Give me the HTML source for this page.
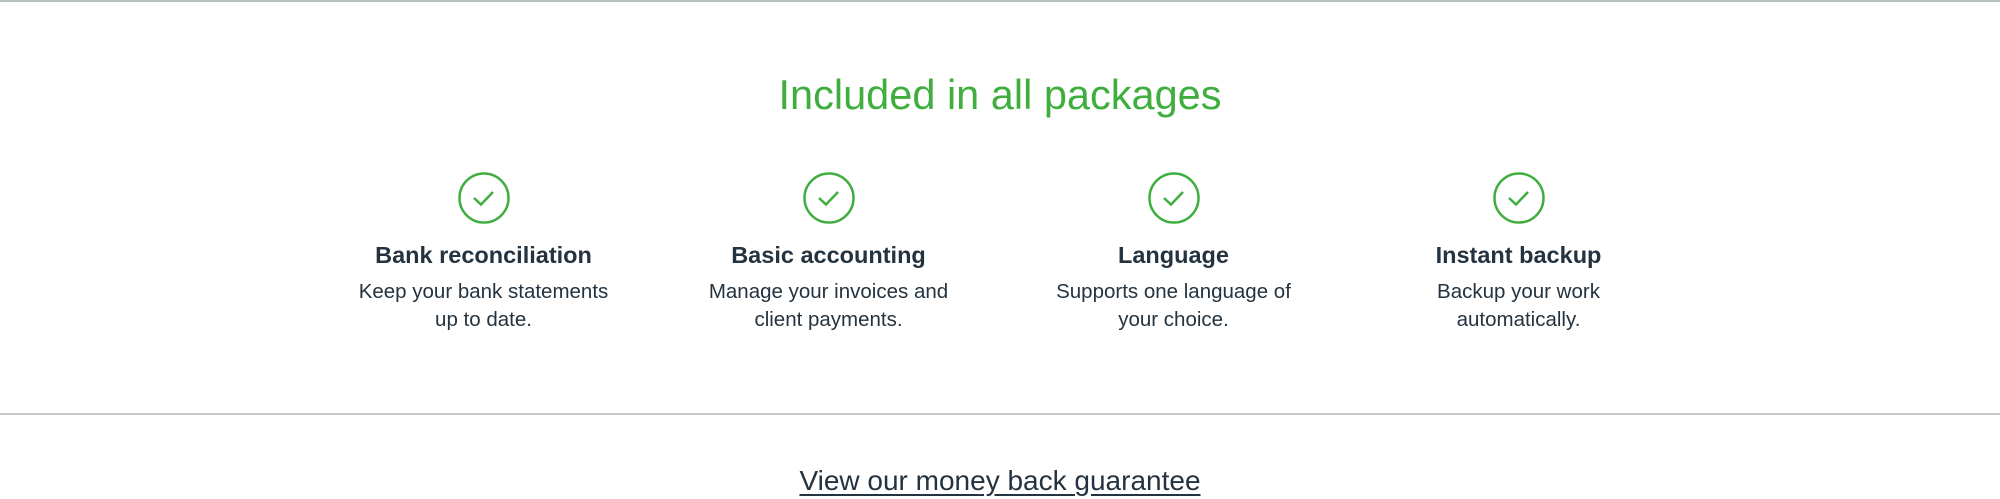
<!DOCTYPE html>
<html><head><style>
body{margin:0;width:2000px;height:498px;background:#fff;position:relative;overflow:hidden;font-family:"Liberation Sans",sans-serif;color:#24333f}
.top{position:absolute;left:0;top:0;width:2000px;height:2px;background:#b7bfc3}
.mid{position:absolute;left:0;top:413px;width:2000px;height:2px;background:#c2c7cb}
h1{position:absolute;left:0;width:2000px;top:70px;margin:0;text-align:center;font-weight:normal;font-size:41.5px;color:#3fae3f;line-height:50px}
.col{position:absolute;top:172px;width:345px;text-align:center}
.col svg{display:block;margin:0 auto}
.col h3{margin:16px 0 0;font-size:23.5px;line-height:30px;font-weight:bold;color:#24333f}
.col p{margin:8px 0 0;font-size:20.5px;line-height:28px;color:#24333f}
.link{position:absolute;left:0;width:2000px;top:463px;text-align:center;font-size:28px;line-height:36px;color:#24333f;text-decoration:underline;text-underline-offset:4px}
</style></head><body>
<div class="top"></div>
<h1>Included in all packages</h1>
<div class="col" style="left:311px">
<svg width="52" height="52" viewBox="0 0 52 52"><circle cx="26" cy="26" r="24.5" fill="none" stroke="#3fae3f" stroke-width="2.5"/><path d="M16 26 L23 32.5 L35 20" fill="none" stroke="#3fae3f" stroke-width="2.5"/></svg>
<h3>Bank reconciliation</h3><p>Keep your bank statements<br>up to date.</p></div>
<div class="col" style="left:656px">
<svg width="52" height="52" viewBox="0 0 52 52"><circle cx="26" cy="26" r="24.5" fill="none" stroke="#3fae3f" stroke-width="2.5"/><path d="M16 26 L23 32.5 L35 20" fill="none" stroke="#3fae3f" stroke-width="2.5"/></svg>
<h3>Basic accounting</h3><p>Manage your invoices and<br>client payments.</p></div>
<div class="col" style="left:1001px">
<svg width="52" height="52" viewBox="0 0 52 52"><circle cx="26" cy="26" r="24.5" fill="none" stroke="#3fae3f" stroke-width="2.5"/><path d="M16 26 L23 32.5 L35 20" fill="none" stroke="#3fae3f" stroke-width="2.5"/></svg>
<h3>Language</h3><p>Supports one language of<br>your choice.</p></div>
<div class="col" style="left:1346px">
<svg width="52" height="52" viewBox="0 0 52 52"><circle cx="26" cy="26" r="24.5" fill="none" stroke="#3fae3f" stroke-width="2.5"/><path d="M16 26 L23 32.5 L35 20" fill="none" stroke="#3fae3f" stroke-width="2.5"/></svg>
<h3>Instant backup</h3><p>Backup your work<br>automatically.</p></div>
<div class="mid"></div>
<div class="link">View our money back guarantee</div>
</body></html>
